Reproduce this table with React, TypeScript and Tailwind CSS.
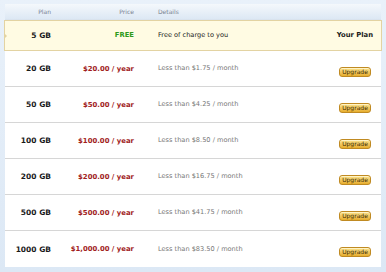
const plans = [
  { size: "20 GB", price: "$20.00 / year", month: "$1.75" },
  { size: "50 GB", price: "$50.00 / year", month: "$4.25" },
  { size: "100 GB", price: "$100.00 / year", month: "$8.50" },
  { size: "200 GB", price: "$200.00 / year", month: "$16.75" },
  { size: "500 GB", price: "$500.00 / year", month: "$41.75" },
  { size: "1000 GB", price: "$1,000.00 / year", month: "$83.50" },
];

function UpgradeButton() {
  return (
    <button className="h-[10px] w-[32px] rounded-[3px] border border-[#c08a22] bg-gradient-to-b from-[#fbe38c] to-[#e6ad2a] text-[6px] leading-none text-[#3d2a00] shadow-[inset_0_1px_0_#fff3c4]">
      Upgrade
    </button>
  );
}

export default function App() {
  return (
    <div
      className="w-[386px] h-[272px] bg-gradient-to-b from-[#e9f1fa] to-[#dce8f5] px-[5px] pt-[4px] pb-[5px]"
      style={{ fontFamily: '"DejaVu Sans", Verdana, sans-serif' }}
    >
      <div className="h-full bg-white flex flex-col">
        {/* Header */}
        <div className="h-[16px] flex items-center bg-gradient-to-b from-[#f4f8fc] to-[#dde8f4] text-[6px] text-[#7a8391] border-b border-[#d9e3ee]">
          <div className="w-[46px] text-right">Plan</div>
          <div className="w-[83px] text-right">Price</div>
          <div className="ml-[24px]">Details</div>
        </div>

        {/* Current plan */}
        <div className="relative h-[31px] flex items-center bg-[#fffbe3] border border-[#e3d3a2] -mx-px">
          <div className="absolute left-[-1px] top-[12px] w-0 h-0 border-y-[3px] border-y-transparent border-l-[3px] border-l-[#e3d3a2]" />
          <div className="w-[46px] text-right text-[7.5px] font-bold text-[#1a1a1a]">5 GB</div>
          <div className="w-[83px] text-right text-[6.8px] font-bold text-[#2f9a1c]">FREE</div>
          <div className="ml-[24px] flex-1 text-[6.6px] text-[#222]">Free of charge to you</div>
          <div className="mr-[8px] text-[6.8px] font-bold text-[#1a1a1a]">Your Plan</div>
        </div>

        {/* Paid plans */}
        {plans.map((p, i) => (
          <div
            key={p.size}
            className={
              "h-[36px] flex items-center pt-px " +
              (i < plans.length - 1 ? "border-b border-[#d6d6d6]" : "")
            }
          >
            <div className="w-[46px] text-right text-[7.5px] font-bold text-[#1a1a1a] whitespace-nowrap">
              {p.size}
            </div>
            <div className="w-[83px] text-right text-[6.9px] font-bold text-[#a11d1d] whitespace-nowrap">
              {p.price}
            </div>
            <div className="ml-[24px] flex-1 text-[6.6px] text-[#777]">
              Less than {p.month} / month
            </div>
            <div className="mr-[10px] -mt-px">
              <UpgradeButton />
            </div>
          </div>
        ))}
      </div>
    </div>
  );
}
